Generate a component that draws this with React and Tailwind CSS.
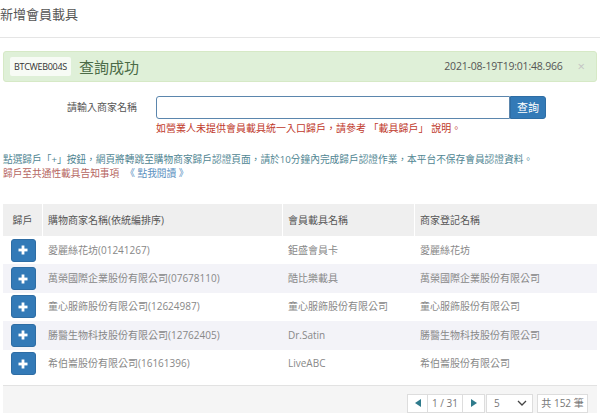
import React from 'react';

const rows = [
    { shop: '愛麗絲花坊(01241267)', card: '鉅盛會員卡', reg: '愛麗絲花坊' },
    { shop: '萬榮國際企業股份有限公司(07678110)', card: '酷比樂載具', reg: '萬榮國際企業股份有限公司' },
    { shop: '童心服飾股份有限公司(12624987)', card: '童心服飾股份有限公司', reg: '童心服飾股份有限公司' },
    { shop: '勝醫生物科技股份有限公司(12762405)', card: 'Dr.Satin', reg: '勝醫生物科技股份有限公司' },
    { shop: '希伯崙股份有限公司(16161396)', card: 'LiveABC', reg: '希伯崙股份有限公司' },
];

const PlusButton = () => (
    <button className="w-[25px] h-[23px] rounded-[3px] bg-[#337ab7] border border-[#2e6da4] flex items-center justify-center">
        <svg width="10" height="10" viewBox="0 0 10 10">
            <rect x="3.6" y="0.5" width="2.8" height="9" fill="white" />
            <rect x="0.5" y="3.6" width="9" height="2.8" fill="white" />
        </svg>
    </button>
);

const App = () => {
    return (
        <div className="w-[600px] h-[413px] bg-white overflow-hidden flex flex-col font-['Open_Sans','Noto_Sans_CJK_TC',sans-serif]">
            {/* Title */}
            <div className="h-[38px] pt-[5px] border-b border-[#e5e5e5] text-[13px] leading-[18px] text-[#555]">
                新增會員載具
            </div>

            {/* Success alert */}
            <div className="mt-[13px] mx-[3px] h-[31px] bg-[#dff0d8] border border-[#d6e9c6] rounded-[3px] flex items-center pl-[6px]">
                <span className="h-[19px] px-[4px] flex items-center bg-[#f7fbf5] rounded-[2px] text-[9px] tracking-[-0.3px] text-[#333]">
                    BTCWEB004S
                </span>
                <span className="ml-[8px] text-[15px] leading-[20px] text-[#4b6b47]">查詢成功</span>
                <span className="ml-auto text-[10.5px] tracking-[-0.2px] text-[#555]">2021-08-19T19:01:48.966</span>
                <span className="ml-[15px] mr-[11px] text-[13px] leading-none text-[#c4c4c4]">×</span>
            </div>

            {/* Search form */}
            <div className="mt-[14px] flex items-center h-[23px]">
                <div className="w-[137px] text-right text-[10px] text-[#555]">請輸入商家名稱</div>
                <input
                    type="text"
                    className="ml-[19px] w-[354px] h-[23px] border border-[#5b86ad] rounded-l-[3px] outline-none px-2 text-[11px]"
                />
                <button className="w-[36px] h-[23px] bg-[#337ab7] border border-[#2e6da4] rounded-r-[3px] text-white text-[11px] leading-none">
                    查詢
                </button>
            </div>
            <div className="mt-[2px] ml-[156px] text-[10px] leading-[14px] text-[#c0392b]">
                如營業人未提供會員載具統一入口歸戶，請參考 「載具歸戶」 說明。
            </div>

            {/* Instructions */}
            <div className="mt-[18px] pl-[3px] text-[9.7px] leading-[14px]">
                <div className="text-[#4f8592]">
                    點選歸戶「+」按鈕，網頁將轉跳至購物商家歸戶認證頁面，請於10分鐘內完成歸戶認證作業，本平台不保存會員認證資料。
                </div>
                <div>
                    <span className="text-[#b5655f]">歸戶至共通性載具告知事項</span>
                    <span className="ml-[6px] text-[#5a8fc0]">《 點我閱讀 》</span>
                </div>
            </div>

            {/* Table */}
            <div className="mt-[23px] mx-[3px]">
                <div className="grid grid-cols-[40px_240px_132px_182px] h-[32px] text-[10px] text-[#555]">
                    <div className="bg-[#efefef] flex items-center justify-center border-r border-white">歸戶</div>
                    <div className="bg-[#efefef] flex items-center pl-[5px] border-r border-white">購物商家名稱(依統編排序)</div>
                    <div className="bg-[#efefef] flex items-center pl-[5px] border-r border-white">會員載具名稱</div>
                    <div className="bg-[#efefef] flex items-center pl-[5px]">商家登記名稱</div>
                </div>
                {rows.map((row, i) => (
                    <div
                        key={i}
                        className={`grid grid-cols-[40px_240px_132px_182px] h-[28.4px] text-[10px] text-[#888] ${
                            i % 2 === 1 ? 'bg-[#f3f3f8]' : 'bg-white'
                        }`}
                    >
                        <div className="flex items-center justify-center"><PlusButton /></div>
                        <div className="flex items-center pl-[5px]">{row.shop}</div>
                        <div className="flex items-center pl-[5px]">{row.card}</div>
                        <div className="flex items-center pl-[5px]">{row.reg}</div>
                    </div>
                ))}
            </div>

            {/* Pagination */}
            <div className="mt-[7px] mx-[3px] flex-1 border-t border-[#e2e2e2] bg-[#f5f5f5] flex items-start justify-end pt-[8px] pr-[9px] text-[10px] text-[#777]">
                <div className="flex h-[19px]">
                    <div className="w-[21px] bg-white border border-[#ddd] flex items-center justify-center">
                        <svg width="6" height="8" viewBox="0 0 6 8"><path d="M6 0 L0 4 L6 8 Z" fill="#2f7b8c" /></svg>
                    </div>
                    <div className="w-[34px] bg-white border-y border-[#ddd] flex items-center justify-center">1 / 31</div>
                    <div className="w-[23px] bg-white border border-[#ddd] flex items-center justify-center">
                        <svg width="6" height="8" viewBox="0 0 6 8"><path d="M0 0 L6 4 L0 8 Z" fill="#2f7b8c" /></svg>
                    </div>
                    <div className="ml-[1px] w-[47px] bg-white border border-[#ddd] flex items-center justify-between pl-[7px] pr-[5px]">
                        <span>5</span>
                        <svg width="10" height="6" viewBox="0 0 10 6"><path d="M1 1 L5 5 L9 1" stroke="#444" strokeWidth="1.3" fill="none" /></svg>
                    </div>
                    <div className="ml-[4px] w-[51px] bg-white border border-[#ddd] flex items-center justify-center">共 152 筆</div>
                </div>
            </div>
        </div>
    );
};

export default App;
